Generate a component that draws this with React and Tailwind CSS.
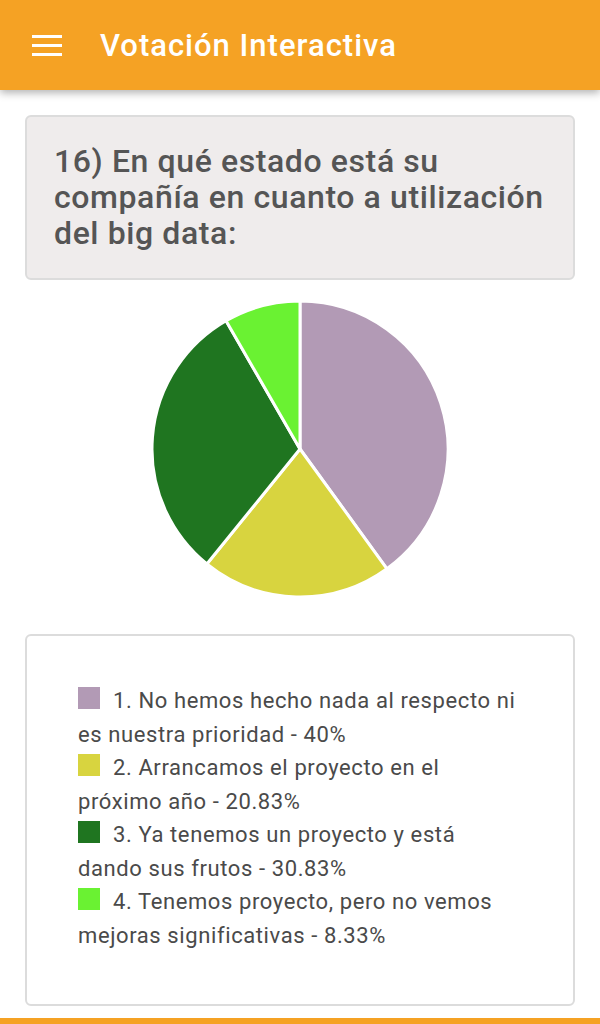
import React from 'react';

const data = [
  { label: '1. No hemos hecho nada al respecto ni es nuestra prioridad - 40%', value: 40, color: '#B29AB5' },
  { label: '2. Arrancamos el proyecto en el próximo año - 20.83%', value: 20.83, color: '#D8D43F' },
  { label: '3. Ya tenemos un proyecto y está dando sus frutos - 30.83%', value: 30.83, color: '#1F7520' },
  { label: '4. Tenemos proyecto, pero no vemos mejoras significativas - 8.33%', value: 8.33, color: '#6AF232' },
];

function PieChart() {
  const cx = 150, cy = 150, r = 148;
  const total = data.reduce((s, d) => s + d.value, 0);
  let angle = -Math.PI / 2;
  const slices = data.map((d) => {
    const a0 = angle;
    const a1 = angle + (d.value / total) * Math.PI * 2;
    angle = a1;
    const x0 = cx + r * Math.cos(a0), y0 = cy + r * Math.sin(a0);
    const x1 = cx + r * Math.cos(a1), y1 = cy + r * Math.sin(a1);
    const large = a1 - a0 > Math.PI ? 1 : 0;
    return { d: `M${cx},${cy} L${x0},${y0} A${r},${r} 0 ${large} 1 ${x1},${y1} Z`, color: d.color };
  });
  return (
    <svg width="300" height="300" viewBox="0 0 300 300">
      {slices.map((s, i) => (
        <path key={i} d={s.d} fill={s.color} stroke="#ffffff" strokeWidth="3" strokeLinejoin="round" />
      ))}
    </svg>
  );
}

export default function App() {
  return (
    <div className="min-h-[1024px] bg-white flex flex-col" style={{ fontFamily: 'Roboto, "Noto Sans", sans-serif' }}>
      {/* Toolbar */}
      <header className="h-[90px] bg-[#F5A224] flex items-center shadow-[0_3px_8px_rgba(0,0,0,0.3)] relative z-10">
        <div className="ml-[32px] w-[30px] flex flex-col gap-[6px]">
          <span className="block h-[3px] bg-white"></span>
          <span className="block h-[3px] bg-white"></span>
          <span className="block h-[3px] bg-white"></span>
        </div>
        <h1 className="ml-[38px] text-white text-[31px] tracking-[1px] font-medium leading-none">Votación Interactiva</h1>
      </header>

      <main className="flex-1 px-[25px] pt-[25px]">
        {/* Question */}
        <div className="h-[165px] bg-[#EFECEC] border-2 border-[#DCDCDC] rounded-md pl-[27px] pr-[16px] pt-[26px]">
          <p className="text-[32px] tracking-[0.6px] leading-[36px] font-medium text-[#555555]">
            16) En qué estado está su compañía en cuanto a utilización del big data:
          </p>
        </div>

        {/* Chart */}
        <div className="flex justify-center mt-[19px]">
          <PieChart />
        </div>

        {/* Legend */}
        <div className="mt-[35px] h-[372px] border-2 border-[#DCDCDC] rounded-md bg-white pl-[51px] pr-[52px] pt-[48px]">
          {data.map((d, i) => (
            <p key={i} className="text-[22px] tracking-[0.6px] leading-[33.5px] text-[#4A4A4A]">
              <span className="inline-block w-[22px] h-[22px] mr-[13px] align-[-1px]" style={{ backgroundColor: d.color }}></span>
              {d.label}
            </p>
          ))}
        </div>
      </main>

      <div className="h-[7px] bg-[#F5A224] mt-[12px]"></div>
    </div>
  );
}
